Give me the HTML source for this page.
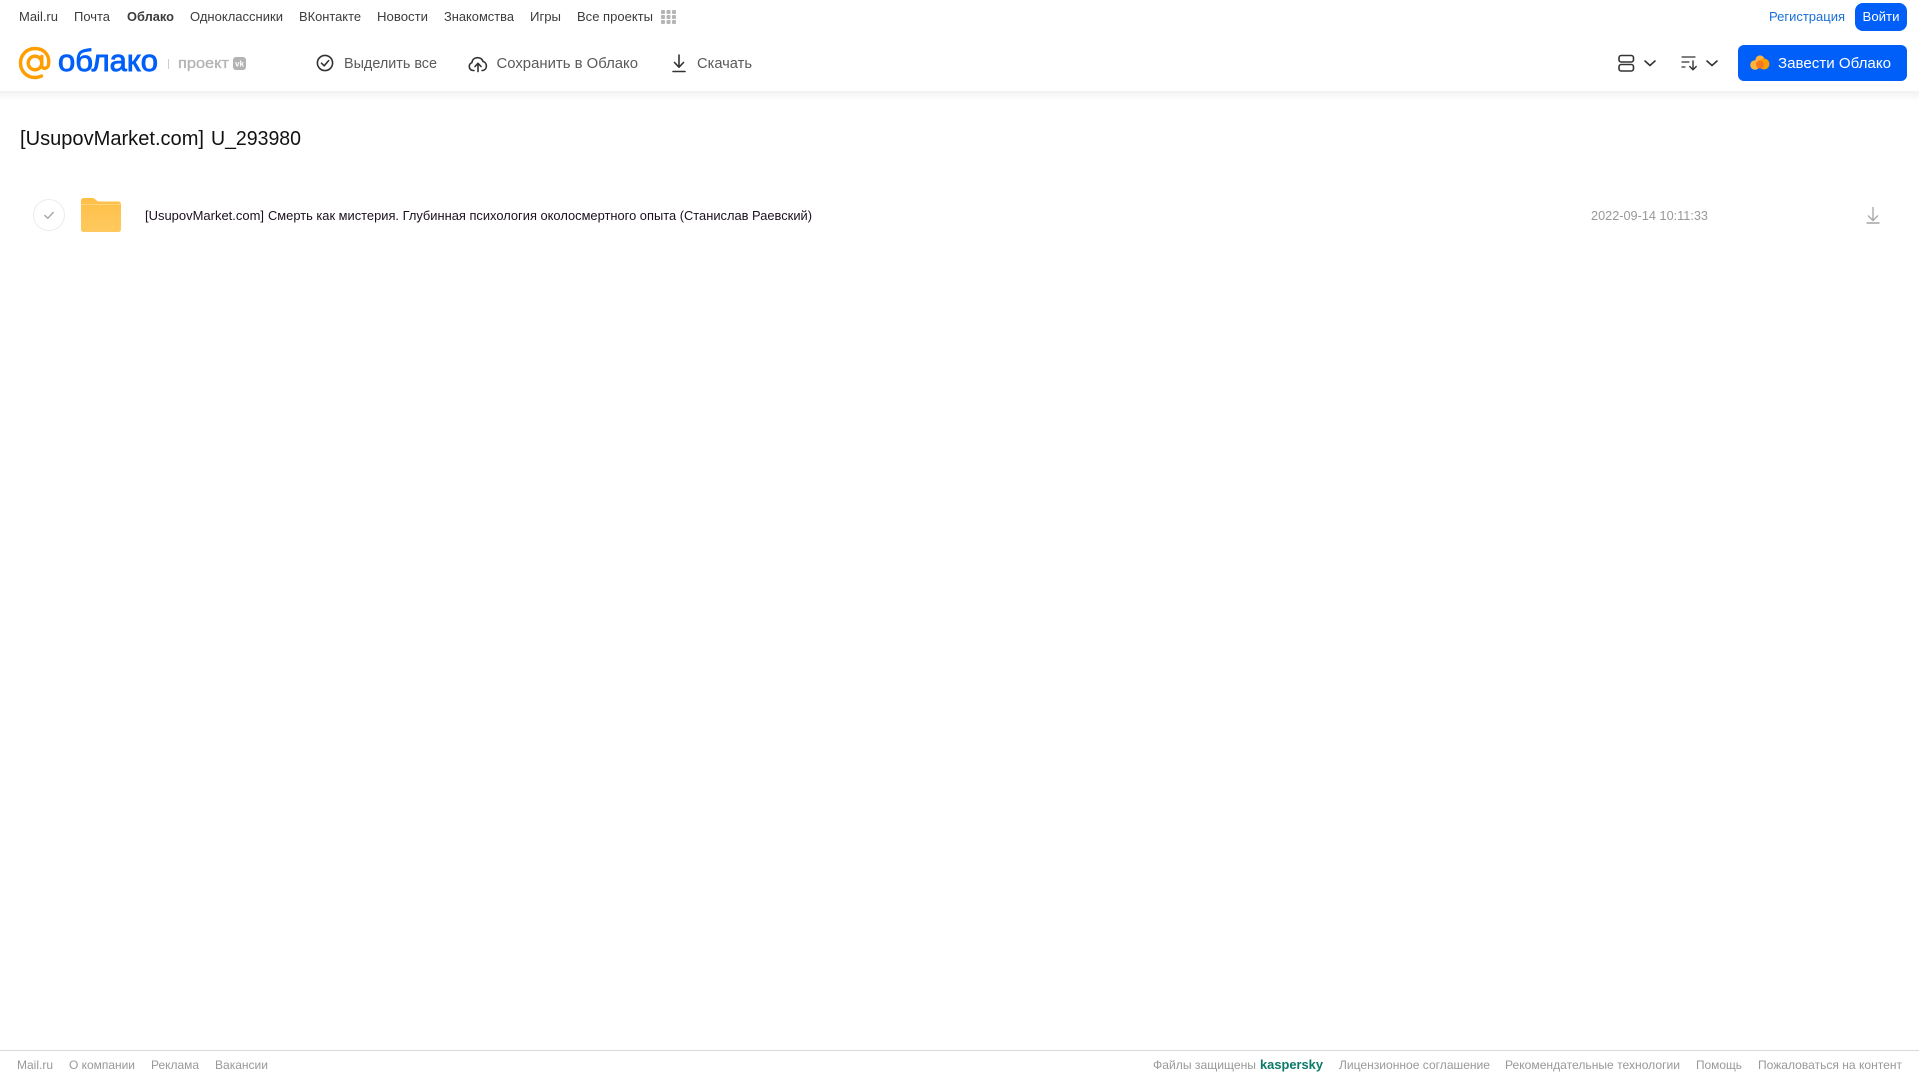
<!DOCTYPE html>
<html lang="ru"><head><meta charset="utf-8"><title>Облако</title>
<style>
html,body{margin:0;padding:0;background:#fff;width:1919px;height:1079px;overflow:hidden}
svg{position:absolute;left:0;top:0;display:block}
text{font-family:"Liberation Sans","DejaVu Sans",sans-serif}
.n{font-size:13px;fill:#3c3c3c}
.t{font-size:15px;fill:#5a5a5a}
.f{font-size:12px;fill:#999}
</style></head><body>
<svg width="1919" height="1079" viewBox="0 0 1919 1079" xmlns="http://www.w3.org/2000/svg">
<defs>
<linearGradient id="sh" x1="0" y1="0" x2="0" y2="1"><stop offset="0" stop-color="#f2f2f2"/><stop offset="1" stop-color="#fff"/></linearGradient>
<linearGradient id="fo" x1="0" y1="0" x2="0" y2="1"><stop offset="0" stop-color="#ffbf47"/><stop offset="1" stop-color="#ffc95f"/></linearGradient>
</defs>
<rect x="0" y="91" width="1919" height="10" fill="url(#sh)"/>

<!-- top nav -->
<text class="n" x="19" y="21" textLength="39" lengthAdjust="spacingAndGlyphs">Mail.ru</text>
<text class="n" x="74" y="21" textLength="36" lengthAdjust="spacingAndGlyphs">Почта</text>
<text class="n" x="127" y="21" textLength="47" lengthAdjust="spacingAndGlyphs" font-weight="700">Облако</text>
<text class="n" x="190" y="21" textLength="93" lengthAdjust="spacingAndGlyphs">Одноклассники</text>
<text class="n" x="299" y="21" textLength="62" lengthAdjust="spacingAndGlyphs">ВКонтакте</text>
<text class="n" x="377" y="21" textLength="51" lengthAdjust="spacingAndGlyphs">Новости</text>
<text class="n" x="444" y="21" textLength="70" lengthAdjust="spacingAndGlyphs">Знакомства</text>
<text class="n" x="530" y="21" textLength="31" lengthAdjust="spacingAndGlyphs">Игры</text>
<text class="n" x="577" y="21" textLength="76" lengthAdjust="spacingAndGlyphs">Все проекты</text>
<g fill="#b5b5b5">
<rect x="661" y="10" width="4" height="4" rx="1"/><rect x="666.500" y="10" width="4" height="4" rx="1"/><rect x="672" y="10" width="4" height="4" rx="1"/>
<rect x="661" y="15" width="4" height="4" rx="1"/><rect x="666.500" y="15" width="4" height="4" rx="1"/><rect x="672" y="15" width="4" height="4" rx="1"/>
<rect x="661" y="20" width="4" height="4" rx="1"/><rect x="666.500" y="20" width="4" height="4" rx="1"/><rect x="672" y="20" width="4" height="4" rx="1"/>
</g>
<text x="1769" y="21" font-size="13" fill="#1a6fd8" textLength="76" lengthAdjust="spacingAndGlyphs">Регистрация</text>
<rect x="1855" y="3" width="52" height="28" rx="8" fill="#005ff9"/>
<text x="1862.500" y="21" font-size="13" fill="#fff" textLength="37" lengthAdjust="spacingAndGlyphs">Войти</text>

<!-- logo -->
<g fill="none" stroke="#ff9e00" stroke-width="3.4" stroke-linecap="round">
<circle cx="35" cy="63" r="6.8"/>
<path d="M41.800 56.500V65.500C41.800 69.500 47.800 69.500 48.600 64.500C50 55 44 48.500 35 48.500C26.500 48.500 20.500 55 20.500 63C20.500 71 26.500 77.500 35 77.500C37.500 77.500 39.500 77 41.500 76"/>
</g>
<text x="58" y="71" font-size="31" fill="#005ff9" stroke="#005ff9" stroke-width="0.9" textLength="100" lengthAdjust="spacingAndGlyphs">облако</text>
<rect x="168" y="59" width="1" height="10" fill="#ccc"/>
<text x="178" y="68" font-size="15" fill="#b3b3b3" stroke="#b3b3b3" stroke-width="0.3" textLength="51" lengthAdjust="spacingAndGlyphs">проект</text>
<rect x="233" y="57" width="13" height="13" rx="3" fill="#b3b3b3"/>
<text x="235" y="66.500" font-size="8" font-weight="700" fill="#fff" textLength="9" lengthAdjust="spacingAndGlyphs">vk</text>

<!-- toolbar -->
<g fill="none" stroke="#333" stroke-width="1.6" stroke-linecap="round" stroke-linejoin="round">
<circle cx="325" cy="63" r="7.600"/>
<path d="M321.500 63.200L324.200 65.800L328.600 60.600"/>
<path d="M474 70.500H473C468.500 70 468 64 472 62.500C472.500 56.500 481.500 56 483 61.500C487.500 62.500 487.500 69.500 483 70.500H482"/>
<path d="M478 71.500V63.500M475 66.500L478 63.300L481 66.500"/>
<path d="M679 55V67M674.500 62.500L679 67.200L683.500 62.500"/>
<path d="M673 71.500H685"/>
</g>
<text class="t" x="344" y="68" textLength="93" lengthAdjust="spacingAndGlyphs">Выделить все</text>
<text class="t" x="496.500" y="68" textLength="141.500" lengthAdjust="spacingAndGlyphs">Сохранить в Облако</text>
<text class="t" x="697" y="68" textLength="55" lengthAdjust="spacingAndGlyphs">Скачать</text>

<!-- view / sort -->
<g fill="none" stroke="#333" stroke-width="1.6" stroke-linecap="round" stroke-linejoin="round">
<rect x="1619" y="55.500" width="14.500" height="6.500" rx="2.200"/>
<rect x="1619" y="64.500" width="14.500" height="6.500" rx="2.200"/>
<path d="M1645 61L1650 65.500L1655 61"/>
<path d="M1707 61L1712 65.500L1717 61"/>
<path d="M1682 57H1695M1682 62H1689M1682 67H1685" stroke-width="1.200"/>
<path d="M1693 61V69.500M1689.800 66.500L1693 69.800L1696.200 66.500" stroke-width="1.400"/>
</g>

<!-- CTA -->
<rect x="1738" y="45" width="169" height="36" rx="6" fill="#005ff9"/>
<circle cx="1755" cy="65" r="4.800" fill="#ffb33c"/>
<circle cx="1760" cy="60" r="4.600" fill="#ffb33c"/>
<circle cx="1764" cy="64" r="5.400" fill="#ff9e00"/>
<circle cx="1760" cy="64.500" r="4" fill="#f47a20"/>
<text x="1778" y="68" font-size="15" fill="#fff" textLength="113" lengthAdjust="spacingAndGlyphs">Завести Облако</text>

<!-- title -->
<text x="20" y="145" font-size="20" fill="#111" textLength="184" lengthAdjust="spacingAndGlyphs">[UsupovMarket.com]</text>
<text x="211" y="145" font-size="20" fill="#111" textLength="90" lengthAdjust="spacingAndGlyphs">U_293980</text>

<!-- row -->
<circle cx="49" cy="215" r="15.500" fill="#fff" stroke="#ececec" stroke-width="1"/>
<path d="M44.800 215.500L47.800 218.300L53.200 212.500" fill="none" stroke="#a5a5a5" stroke-width="1.400" stroke-linecap="round" stroke-linejoin="round"/>
<path d="M81 201C81 199 82 198 84 198H92C94 198 95 199 96 200C97 201 98 201.500 99 201.500H118C120 201.500 121 202.500 121 204.500V229C121 231 120 232 118 232H84C82 232 81 231 81 229Z" fill="url(#fo)"/>
<rect x="81" y="204" width="40" height="1" fill="#ffd57e"/>
<text x="145" y="220" font-size="13" fill="#1a1020" textLength="119" lengthAdjust="spacingAndGlyphs">[UsupovMarket.com]</text>
<text x="268" y="220" font-size="13" fill="#1a1020" textLength="544" lengthAdjust="spacingAndGlyphs">Смерть как мистерия. Глубинная психология околосмертного опыта (Станислав Раевский)</text>
<text x="1591" y="220" font-size="13" fill="#999" textLength="117" lengthAdjust="spacingAndGlyphs">2022-09-14 10:11:33</text>
<path d="M1873 207V220M1868 215.500L1873 220.500L1878 215.500" fill="none" stroke="#aaa" stroke-width="1.400"/>
<path d="M1866.500 223H1879.500" stroke="#aaa" stroke-width="1.600"/>

<!-- footer -->
<rect x="0" y="1050" width="1919" height="1" fill="#d9d9d9"/>
<text class="f" x="17" y="1069" textLength="36" lengthAdjust="spacingAndGlyphs">Mail.ru</text>
<text class="f" x="69" y="1069" textLength="66" lengthAdjust="spacingAndGlyphs">О компании</text>
<text class="f" x="151" y="1069" textLength="48" lengthAdjust="spacingAndGlyphs">Реклама</text>
<text class="f" x="215" y="1069" textLength="53" lengthAdjust="spacingAndGlyphs">Вакансии</text>
<text class="f" x="1153" y="1069" textLength="103" lengthAdjust="spacingAndGlyphs">Файлы защищены</text>
<text x="1260" y="1069" font-size="13" font-weight="700" fill="#0b7a66" textLength="63" lengthAdjust="spacingAndGlyphs">kaspersky</text>
<text class="f" x="1339" y="1069" textLength="151" lengthAdjust="spacingAndGlyphs">Лицензионное соглашение</text>
<text class="f" x="1505" y="1069" textLength="175" lengthAdjust="spacingAndGlyphs">Рекомендательные технологии</text>
<text class="f" x="1696" y="1069" textLength="46" lengthAdjust="spacingAndGlyphs">Помощь</text>
<text class="f" x="1758" y="1069" textLength="144" lengthAdjust="spacingAndGlyphs">Пожаловаться на контент</text>
</svg>
</body></html>
